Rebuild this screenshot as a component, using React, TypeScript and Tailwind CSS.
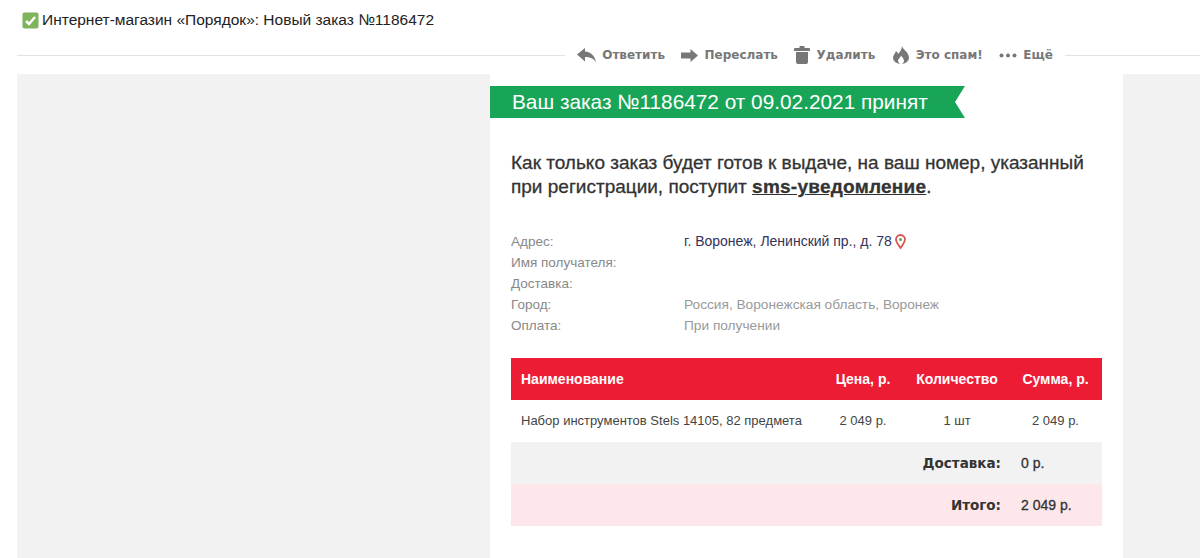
const actions = [
    { label: 'Ответить', icon: 'reply' },
    { label: 'Переслать', icon: 'forward' },
    { label: 'Удалить', icon: 'trash' },
    { label: 'Это спам!', icon: 'flame' },
    { label: 'Ещё', icon: 'more' },
];

const details = [
    { label: 'Адрес:', value: 'г. Воронеж, Ленинский пр., д. 78', strong: true },
    { label: 'Имя получателя:', value: '' },
    { label: 'Доставка:', value: '' },
    { label: 'Город:', value: 'Россия, Воронежская область, Воронеж' },
    { label: 'Оплата:', value: 'При получении' },
];

function ActionIcon({ name }: { name: string }) {
    if (name === 'reply') {
        return (
            <svg width="19" height="15" viewBox="0 0 19 15" fill="#777">
                <path d="M0 6.500 8 0v3.500c6 .5 10 4.500 11 11-2-4-6-5.500-11-5.500v4.500z" />
            </svg>
        );
    }
    if (name === 'forward') {
        return (
            <svg width="17" height="13" viewBox="0 0 17 13" fill="#777">
                <path d="M0 3.500h9.500V0L17 6.500 9.500 13V9.500H0z" />
            </svg>
        );
    }
    if (name === 'trash') {
        return (
            <svg width="16" height="18" viewBox="0 0 16 18" fill="#777">
                <path d="M5.500 0h5v2H15a1 1 0 0 1 1 1v2H0V3a1 1 0 0 1 1-1h4.500z" />
                <path d="M2 6h12v10a2 2 0 0 1-2 2H4a2 2 0 0 1-2-2z" />
            </svg>
        );
    }
    if (name === 'flame') {
        return (
            <svg width="18" height="18" viewBox="0 0 18 18">
                <path d="M10 0c1 4 7 6 7 12a8 6 0 0 1-16 0c0-3 2-4 3-7 1 1 2 2 2 3 2-2 4-5 4-8z" fill="#777" />
                <path d="M9 18c-2 0-3-2-3-3.500 0-2 3-3 3-5 1 2 3 3 3 5 0 1.500-1 3.500-3 3.500z" fill="#fff" />
            </svg>
        );
    }
    return (
        <svg width="18" height="5" viewBox="0 0 18 5" fill="#777">
            <circle cx="2.500" cy="2.500" r="2" />
            <circle cx="9" cy="2.500" r="2" />
            <circle cx="15.500" cy="2.500" r="2" />
        </svg>
    );
}

export default function App() {
    return (
        <div className="h-[558px] w-[1200px] overflow-hidden bg-white font-['Liberation_Sans',sans-serif]">
            {/* Subject */}
            <div className="flex h-10 items-center gap-[3px] pl-[22px] text-[15.5px] text-[#222]">
                <svg width="17" height="17" viewBox="0 0 17 17">
                    <rect width="16" height="16" x="0.500" y="0.500" rx="2" fill="#7fb45a" />
                    <path d="M4 9l3 3 6-7" fill="none" stroke="#fff" strokeWidth="2.500" />
                </svg>
                Интернет-магазин «Порядок»: Новый заказ №1186472
            </div>

            {/* Toolbar */}
            <div className="mb-1 ml-[17px] flex h-[30px] items-center">
                <div className="h-px w-[548px] bg-[#e3e3e3]" />
                <div className="flex w-[500px] items-center justify-center gap-[16.500px] font-['DejaVu_Sans',sans-serif] text-xs font-bold text-[#777]">
                    {actions.map((action) => (
                        <div key={action.label} className="flex items-center gap-[6px]">
                            <ActionIcon name={action.icon} />
                            {action.label}
                        </div>
                    ))}
                </div>
                <div className="h-px flex-1 bg-[#e3e3e3]" />
            </div>

            {/* Message body */}
            <div className="flex h-[484px] pl-[17px]">
                <div className="w-[473px] bg-[#f2f2f2]" />
                <div className="w-[633px] pt-3">
                    <div className="flex h-[32px] w-[475px] items-center bg-[#19a558] pl-[22px] text-[20.800px] text-white [clip-path:polygon(0_0,100%_0,97.900%_50%,100%_100%,0_100%)]">
                        Ваш заказ №1186472 от 09.02.2021 принят
                    </div>
                    <div className="px-[21px]">
                        <p className="mt-[33px] w-[590px] text-[19px]/[24px] text-[#333] [-webkit-text-stroke:0.3px_#333]">
                            Как только заказ будет готов к выдаче, на ваш номер, указанный при регистрации, поступит{' '}
                            <span className="font-bold tracking-[0.25px] underline">sms-уведомление</span>.
                        </p>
                        <div className="mt-[32px] text-[13.500px]/[21px] text-[#888]">
                            {details.map((row) => (
                                <div key={row.label} className="flex h-[21px]">
                                    <div className="w-[173px]">{row.label}</div>
                                    <div className={row.strong ? 'flex items-center gap-[3px] text-[14px] text-[#33335a]' : 'text-[13.700px] text-[#999]'}>
                                        {row.value}
                                        {row.strong && (
                                            <svg width="11" height="15" viewBox="0 0 11 15">
                                                <path d="M5.500 14C3 10 1 8 1 5.500a4.500 4.500 0 0 1 9 0C10 8 8 10 5.500 14z" fill="none" stroke="#d9534f" strokeWidth="1.800" />
                                                <circle cx="5.500" cy="5.500" r="1.500" fill="#5aa469" />
                                            </svg>
                                        )}
                                    </div>
                                </div>
                            ))}
                        </div>

                        <div className="mt-[22px] w-[591px] text-[13px]">
                            <div className="flex h-[42px] items-center bg-[#ed1c35] text-[14px] font-bold text-white">
                                <div className="w-[310px] pl-[10px]">Наименование</div>
                                <div className="w-[84px] text-center">Цена, р.</div>
                                <div className="w-[104px] text-center">Количество</div>
                                <div className="w-[93px] text-center">Сумма, р.</div>
                            </div>
                            <div className="flex h-[42px] items-center text-[#444]">
                                <div className="w-[310px] pl-[10px]">Набор инструментов Stels 14105, 82 предмета</div>
                                <div className="w-[84px] text-center">2 049 р.</div>
                                <div className="w-[104px] text-center">1 шт</div>
                                <div className="w-[93px] text-center">2 049 р.</div>
                            </div>
                            <div className="flex h-[42px] items-center bg-[#f2f2f2] text-[14px] text-[#333]">
                                <div className="w-[490px] text-right font-['DejaVu_Sans',sans-serif] text-[13.500px] font-bold">Доставка:</div>
                                <div className="pl-5 [-webkit-text-stroke:0.3px_#333]">0 р.</div>
                            </div>
                            <div className="flex h-[42px] items-center bg-[#fde7ea] text-[14px] text-[#333]">
                                <div className="w-[490px] text-right font-['DejaVu_Sans',sans-serif] text-[13.500px] font-bold">Итого:</div>
                                <div className="pl-5 [-webkit-text-stroke:0.3px_#333]">2 049 р.</div>
                            </div>
                        </div>
                    </div>
                </div>
                <div className="flex-1 bg-[#f2f2f2]" />
            </div>
        </div>
    );
}
